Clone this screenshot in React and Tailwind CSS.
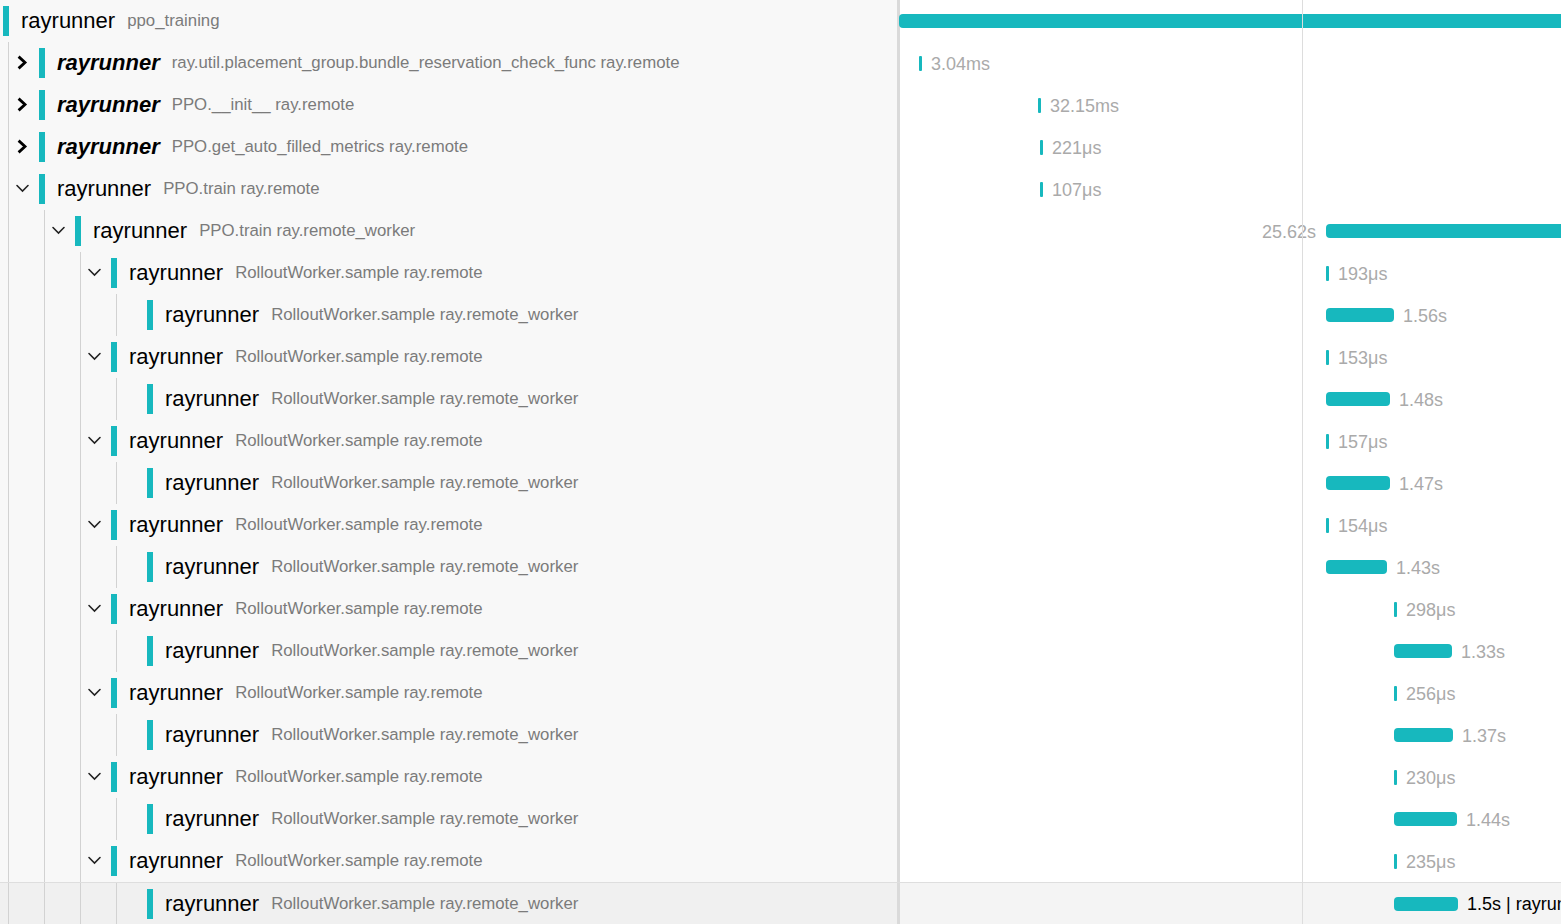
import React from "react";

const TEAL = "#17b8be";

const leftRows = [
  { level: 0, sub: "ppo_training" },
  { level: 1, chev: "right", bold: true, sub: "ray.util.placement_group.bundle_reservation_check_func ray.remote" },
  { level: 1, chev: "right", bold: true, sub: "PPO.__init__ ray.remote" },
  { level: 1, chev: "right", bold: true, sub: "PPO.get_auto_filled_metrics ray.remote" },
  { level: 1, chev: "down", sub: "PPO.train ray.remote" },
  { level: 2, chev: "down", sub: "PPO.train ray.remote_worker" },
];
for (let i = 0; i < 8; i++) {
  leftRows.push({ level: 3, chev: "down", sub: "RolloutWorker.sample ray.remote" });
  leftRows.push({ level: 4, sub: "RolloutWorker.sample ray.remote_worker" });
}

const rightRows = [
  { type: "bar", left: -1, width: 720, label: "" },
  { type: "tick", left: 19, label: "3.04ms" },
  { type: "tick", left: 138, label: "32.15ms" },
  { type: "tick", left: 140, label: "221μs" },
  { type: "tick", left: 140, label: "107μs" },
  { type: "bar", left: 426, width: 300, label: "25.62s", before: true },
  { type: "tick", left: 426, label: "193μs" },
  { type: "bar", left: 426, width: 68, label: "1.56s" },
  { type: "tick", left: 426, label: "153μs" },
  { type: "bar", left: 426, width: 64, label: "1.48s" },
  { type: "tick", left: 426, label: "157μs" },
  { type: "bar", left: 426, width: 64, label: "1.47s" },
  { type: "tick", left: 426, label: "154μs" },
  { type: "bar", left: 426, width: 61, label: "1.43s" },
  { type: "tick", left: 494, label: "298μs" },
  { type: "bar", left: 494, width: 58, label: "1.33s" },
  { type: "tick", left: 494, label: "256μs" },
  { type: "bar", left: 494, width: 59, label: "1.37s" },
  { type: "tick", left: 494, label: "230μs" },
  { type: "bar", left: 494, width: 63, label: "1.44s" },
  { type: "tick", left: 494, label: "235μs" },
  { type: "bar", left: 494, width: 64, label: "1.5s | rayrunner::RolloutWorker.sample ray.remote_worker", hover: true },
];

function Chevron({ dir }) {
  if (dir === "right") {
    return (
      <svg width="16" height="16" viewBox="0 0 16 16" className="shrink-0 ml-[5px]">
        <path d="M4.6 1.6 L11 7.5 L4.6 13.4" fill="none" stroke="#000" strokeWidth="2.8" strokeLinecap="butt" strokeLinejoin="miter" />
      </svg>
    );
  }
  return (
    <svg width="16" height="16" viewBox="0 0 16 16" className="shrink-0 ml-[5px]">
      <path d="M3 4.5 L8.5 10 L14 4.5" fill="none" stroke="#222" strokeWidth="1.6" strokeLinecap="round" strokeLinejoin="miter" />
    </svg>
  );
}

function LeftCell({ row, hover }) {
  const spacers = [];
  for (let k = 1; k <= row.level; k++) {
    const last = k === row.level;
    spacers.push(
      <div key={k} className="w-[36px] h-full flex items-center shrink-0">
        <div className="ml-[5px] w-px h-full bg-[#d2d2d2]" />
        {last && row.chev ? <Chevron dir={row.chev} /> : null}
      </div>
    );
  }
  return (
    <div
      className={
        "w-[900px] shrink-0 h-full flex items-center pl-[3px] overflow-hidden whitespace-nowrap border-r-[3px] border-[#dadada] " +
        (hover ? "bg-[#f0f0f0]" : "bg-[#f8f8f8]")
      }
    >
      {spacers}
      <div className="w-[6px] h-[30px] shrink-0" style={{ backgroundColor: TEAL }} />
      <span
        className={
          "ml-[12px] text-[22px] leading-none text-black " + (row.bold ? "font-bold italic" : "")
        }
      >
        rayrunner
      </span>
      <span className="ml-[12px] mt-[1px] text-[16.8px] leading-none text-[#7b7b7b]">{row.sub}</span>
    </div>
  );
}

function RightCell({ row }) {
  const labelCls =
    "text-[18px] leading-none whitespace-nowrap mt-[1px] " + (row.hover ? "text-black" : "text-[#aaaaaa]");
  if (row.before) {
    return (
      <div className="flex-1 h-full flex items-center">
        <div className="h-full flex items-center justify-end shrink-0" style={{ width: row.left }}>
          <span className={labelCls + " mr-[10px]"}>{row.label}</span>
        </div>
        <div className="h-[14px] shrink-0 rounded-[4px]" style={{ width: row.width, backgroundColor: TEAL }} />
      </div>
    );
  }
  return (
    <div className="flex-1 h-full flex items-center">
      <div className="shrink-0" style={{ width: Math.max(row.left, 0), marginLeft: Math.min(row.left, 0) }} />
      {row.type === "tick" ? (
        <div className="w-[3px] h-[15px] shrink-0 rounded-[1px]" style={{ backgroundColor: TEAL }} />
      ) : (
        <div className="h-[14px] shrink-0 rounded-[4px]" style={{ width: row.width, backgroundColor: TEAL }} />
      )}
      {row.label ? <span className={labelCls + " ml-[9px]"}>{row.label}</span> : null}
    </div>
  );
}

export default function App() {
  return (
    <div
      className="relative w-[1561px] h-[924px] overflow-hidden bg-white"
      style={{ fontFamily: '"Liberation Sans", Arial, sans-serif' }}
    >
      {leftRows.map((row, i) => {
        const r = rightRows[i];
        return (
          <div
            key={i}
            className={
              "h-[42px] flex overflow-hidden " +
              (r.hover ? "bg-[#f4f4f4] border-t border-[#dedede]" : "")
            }
          >
            <LeftCell row={row} hover={r.hover} />
            <RightCell row={r} />
          </div>
        );
      })}
      <div className="absolute top-0 bottom-0 left-[1302px] w-px bg-[#dddddd] pointer-events-none" />
    </div>
  );
}
